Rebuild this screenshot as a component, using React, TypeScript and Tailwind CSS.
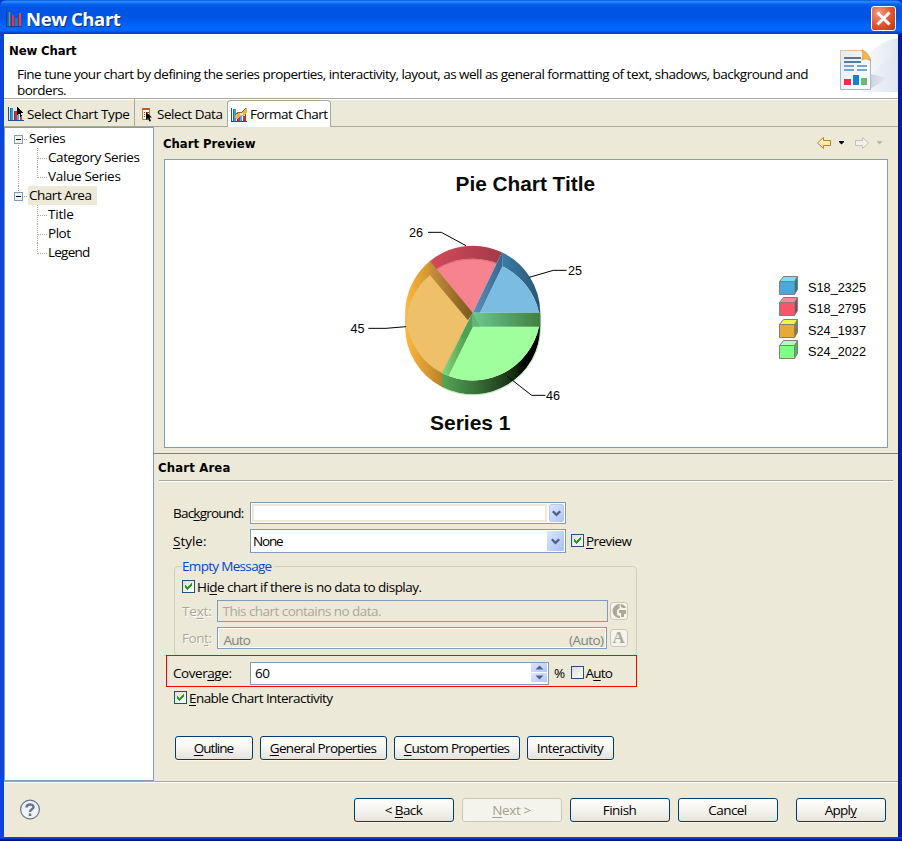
import { useLayoutEffect, useRef, type ReactNode } from "react";

const UI = "font-['Open_Sans','Noto_Sans',sans-serif]";
const HEADING = "font-['DejaVu_Sans_Condensed','DejaVu_Sans',sans-serif] text-[13px] font-bold";

/* A label whose letters are tracked so that its longest line is `w` pixels wide. */
function Label({ w, className = "", children }: { w: number; className?: string; children: ReactNode }) {
  const ref = useRef<HTMLSpanElement>(null);
  useLayoutEffect(() => {
    const el = ref.current;
    if (!el) return;
    el.style.letterSpacing = "0px";
    const n = Math.max(1, ...el.innerText.split("\n").map((line) => line.length));
    el.style.letterSpacing = `${(w - 0.5 - el.getBoundingClientRect().width) / n}px`;
  }, [w, children]);
  return (
    <span ref={ref} className={`inline-block shrink-0 whitespace-nowrap ${className}`}>
      {children}
    </span>
  );
}

function U({ children }: { children: ReactNode }) {
  return <span className="underline decoration-1 underline-offset-2">{children}</span>;
}

function Bars({ children }: { children?: ReactNode }) {
  return (
    <svg width="16" height="16" viewBox="0 0 16 16" shapeRendering="crispEdges" className="-mt-px shrink-0">
      <path d="M0 1h1v13h15v1H0z" fill="#1d5288" />
      <path d="M2 2h3v12H2z" fill="#2f9be0" />
      <path d="M2 2h1v12H2z" fill="#1672b8" />
      <path d="M6 5h3v9H6z" fill="#e02c40" />
      <path d="M6 5h1v9H6z" fill="#a41c30" />
      <path d="M9 8h2v6H9z" fill="#38b4e8" />
      <path d="M12 9h2v5h-2z" fill="#e8404c" />
      {children}
    </svg>
  );
}

function TitleIcon() {
  return (
    <svg width="16" height="18" viewBox="0 0 16 18" shapeRendering="crispEdges">
      <path d="M0 1h1v15h15v1H0z" fill="#1b3f8c" />
      <path d="M2 2h3v14H2z" fill="#31659c" />
      <path d="M3 2h1v14H3z" fill="#3ea5b8" />
      <path d="M6 5h2v11H6z" fill="#e4324c" />
      <path d="M5 5h1v11H5z" fill="#782858" />
      <path d="M9 8h3v8H9z" fill="#2f75a4" />
      <path d="M13 3h2v13h-2z" fill="#f03e50" />
      <path d="M12 3h1v13h-1z" fill="#802848" />
    </svg>
  );
}

const arrowCursor = "M0 0l6 5.5H3.6L5 9 3.4 9.6 2.2 6.4 0 8z";

function Check({ on }: { on?: boolean }) {
  return (
    <span className="-mt-px flex size-[13px] shrink-0 items-center justify-center border border-[#1c5180] bg-linear-to-br from-[#dcdcd7] to-white">
      {on && (
        <svg width="9" height="9" viewBox="0 0 9 9" shapeRendering="crispEdges">
          <path d="M1 3h1v1h1v1h1V4h1V3h1V2h1V1h1v3H7v1H6v1H5v1H4v1H3V7H2V6H1z" fill="#21a121" />
        </svg>
      )}
    </span>
  );
}

function Chevron() {
  return (
    <svg width="9" height="7" viewBox="0 0 9 7">
      <path d="M0.800 1.200l3.700 3.700L8.200 1.200" fill="none" stroke="#4d6185" strokeWidth="2.300" />
    </svg>
  );
}

function Button({ w, tw, className = "", disabled, children }: { w: string; tw: number; className?: string; disabled?: boolean; children: ReactNode }) {
  return (
    <button
      className={`flex h-6 shrink-0 items-center justify-center rounded-[3px] border pr-px ${w} ${className} ${
        disabled
          ? "border-[#c9c7ba] bg-[#f5f4ea] text-[#a1a192]"
          : "border-[#003c74] bg-linear-to-b from-white via-[#f5f4ef] to-[#e6e3da] text-black shadow-[0_1px_0_#f8f6ee]"
      }`}
    >
      <Label w={tw}>{children}</Label>
    </button>
  );
}

function TreeItem({ label, w, level, selected, last }: { label: string; w: number; level: 0 | 1; selected?: boolean; last?: boolean }) {
  if (level === 0)
    return (
      <div className="flex h-[19px] items-center pl-[9px]">
        <svg width="14" height="19" viewBox="0 0 14 19" shapeRendering="crispEdges" className="shrink-0">
          {selected ? <path d="M4.5 0v6" stroke="#aca899" strokeDasharray="1 1" /> : <path d="M4.5 14v5" stroke="#aca899" strokeDasharray="1 1" />}
          <path d="M10 10.5h4" stroke="#aca899" strokeDasharray="1 1" />
          <rect x="0.5" y="6.5" width="8" height="8" fill="#f4f2ec" stroke="#7b9ebd" />
          <path d="M2 10.5h5" stroke="#000" />
        </svg>
        <span className={`flex h-[19px] items-center pb-[2px] pl-px ${selected ? "bg-[#ece9d8] pr-[5px]" : ""}`}>
          <Label w={w}>{label}</Label>
        </span>
      </div>
    );
  return (
    <div className="flex h-[19px] items-center pl-[9px]">
      <svg width="34" height="19" viewBox="0 0 34 19" shapeRendering="crispEdges" className="shrink-0">
        {(label === "Category Series" || label === "Value Series") && <path d="M4.5 0v19" stroke="#aca899" strokeDasharray="1 1" />}
        <path d={last ? "M23.5 0v11M24 10.5h9" : "M23.5 0v19M24 10.5h9"} fill="none" stroke="#aca899" strokeDasharray="1 1" />
      </svg>
      <Label w={w} className="mb-[2px]">{label}</Label>
    </div>
  );
}

const legend = [
  { t: "S18_2325", y: 116, f: "#4fa5dc", top: "#70e4f4", side: "#34749a" },
  { t: "S18_2795", y: 137, f: "#f5566a", top: "#ff8598", side: "#ab3c4a" },
  { t: "S24_1937", y: 159, f: "#e6aa38", top: "#fcf04c", side: "#a17727" },
  { t: "S24_2022", y: 180, f: "#80ff80", top: "#b4ffb4", side: "#59b259" },
];

const grads: [string, string, string][] = [
  ["red", "#d34a5c", "#a23a47"],
  ["blue", "#3a7da8", "#285674"],
  ["blueWall", "#5f8fb8", "#34688f"],
  ["greenWall", "#6cc98e", "#417f41"],
  ["orangeWall", "#c98f3c", "#79591d"],
  ["orange", "#ffb83c", "#b98229"],
  ["greenLeft", "#84d878", "#479047"],
];

function PieChart() {
  return (
    <svg width="722" height="287" viewBox="0 0 722 287" className="block">
      <defs>
        {grads.map(([id, a, b]) => (
          <linearGradient key={id} id={id}>
            <stop offset="0" stopColor={a} />
            <stop offset="1" stopColor={b} />
          </linearGradient>
        ))}
        <linearGradient id="greenSide">
          <stop offset="0" stopColor="#55a655" />
          <stop offset="0.35" stopColor="#397039" />
          <stop offset="0.75" stopColor="#14290f" />
          <stop offset="0.85" stopColor="#000" />
          <stop offset="0.98" stopColor="#000" />
          <stop offset="1" stopColor="#2c5c34" />
        </linearGradient>
      </defs>
      <g className="font-['Liberation_Sans',Arial,sans-serif] font-bold" fontSize="20.500" fill="#0a0a0a">
        <text x="290.500" y="31" textLength="139.500" lengthAdjust="spacingAndGlyphs">Pie Chart Title</text>
        <text x="265" y="270" textLength="80.500" lengthAdjust="spacingAndGlyphs">Series 1</text>
      </g>
      <g transform="translate(175 5) scale(0.33333)">
        <path d="M270 288A203 203 0 0 1 486 262L470 295A203 203 0 0 0 270 330Z" fill="url(#red)" />
        <path d="M270 330L286 314A203 203 0 0 1 470 295L398 443L384 466Z" fill="#f7838f" />
        <path d="M293 308A203 203 0 0 1 472 294" fill="none" stroke="#e07080" strokeWidth="3" transform="translate(0 3)" />
        <path d="M486 262A203 203 0 0 1 601 443H597A203 203 0 0 0 487 304Z" fill="url(#blue)" />
        <path d="M487 304A203 203 0 0 1 597 443H420Z" fill="#7bbce3" />
        <path d="M486 262L487 304L420 443H398Z" fill="url(#blueWall)" />
        <path d="M270 330L384 466L306 624A203 203 0 0 1 197 464A203 203 0 0 1 270 330Z" fill="#eec06a" stroke="#dfa94a" strokeWidth="2" />
        <path d="M270 288A203 203 0 0 0 195.500 443V485A203 203 0 0 0 306 666V624A203 203 0 0 1 198 464A203 203 0 0 1 270 330Z" fill="url(#orange)" />
        <path d="M270 288L398 443L384 466L270 330Z" fill="url(#orangeWall)" />
        <path d="M601 443V485A203 203 0 0 1 306 666V624A203 203 0 0 0 597 485Z" fill="url(#greenSide)" />
        <path d="M602 487A203 203 0 0 1 306 667" fill="none" stroke="#9be09b" strokeWidth="2" />
        <path d="M398 485H597A203 203 0 0 1 326 633Z" fill="#a0ff9d" />
        <path d="M398 443V485L326 633L306 624Z" fill="url(#greenLeft)" />
        <path d="M398 443V485L380 520L362 515Z" fill="#4fa153" />
        <path d="M398 443H601V485H398Z" fill="url(#greenWall)" />
        <path d="M398 485H420L398 443Z" fill="#56aa69" opacity="0.6" />
        <g fill="none" stroke="#000" strokeWidth="3">
          <path d="M264 202H304L378 242" />
          <path d="M568 337L640 316H680" />
          <path d="M85 490H138L198 485" />
          <path d="M502 634L575 691H616" />
        </g>
      </g>
      <g className="font-['Liberation_Sans',Arial,sans-serif]" fontSize="13.500" fill="#000">
        <text x="244" y="77" textLength="14" lengthAdjust="spacingAndGlyphs">26</text>
        <text x="403" y="115" textLength="14" lengthAdjust="spacingAndGlyphs">25</text>
        <text x="185.500" y="173" textLength="14" lengthAdjust="spacingAndGlyphs">45</text>
        <text x="381" y="240" textLength="14" lengthAdjust="spacingAndGlyphs">46</text>
        {legend.map((l) => (
          <g key={l.t}>
            <path d={`M614.500 ${l.y + 5.5}l4 -5h14v13l-3 5h-15z`} fill={l.top} />
            <path d={`M629.500 ${l.y + 5.5}l3 -5v13l-3 5z`} fill={l.side} />
            <path d={`M614.500 ${l.y + 5.5}h15v13h-15z`} fill={l.f} />
            <path d={`M614.500 ${l.y + 5.5}l4 -5h14v13l-3 5h-15zh15v13M629.500 ${l.y + 5.5}l3 -5`} fill="none" stroke="#808080" />
            <text x="643" y={l.y + 16} textLength="58" lengthAdjust="spacingAndGlyphs">{l.t}</text>
          </g>
        ))}
      </g>
    </svg>
  );
}

function HeaderArt() {
  return (
    <svg width="76" height="64" viewBox="0 0 76 64" className="shrink-0">
      <defs>
        <linearGradient id="swoosh" x1="0" y1="0" x2="1" y2="0">
          <stop offset="0" stopColor="#fff" />
          <stop offset="1" stopColor="#e0e6f2" />
        </linearGradient>
        <linearGradient id="page" x1="0" y1="0" x2="1" y2="1">
          <stop offset="0" stopColor="#e2eaf4" />
          <stop offset="1" stopColor="#fff" />
        </linearGradient>
        <linearGradient id="cast" x1="0" y1="0" x2="1" y2="0">
          <stop offset="0" stopColor="#9aa2b4" stopOpacity="0.4" />
          <stop offset="1" stopColor="#9aa2b4" stopOpacity="0" />
        </linearGradient>
      </defs>
      <path d="M76 4C62 6 46 16 36 32V58H76Z" fill="url(#swoosh)" />
      <path d="M76 20C62 24 50 38 40 58H76Z" fill="#dfe5f2" opacity="0.3" />
      <path d="M48 55V40L66 44Z" fill="url(#cast)" />
      <path d="M18.500 16.500H40L48.500 26V55.500H18.500Z" fill="url(#page)" stroke="#a5b6c8" />
      <path d="M18.500 28V16.500H40" fill="none" stroke="#e0c294" />
      <path d="M40 16C41 19 41 23 40 26C43 24 46 25 48.500 27C48 22 44 17 40 16Z" fill="#f5b74f" stroke="#cf9346" strokeWidth="0.700" />
      <path d="M22 23h17v2H22z" fill="#667083" />
      <path d="M22 27h17v2H22z" fill="#4b7eae" />
      <path d="M22 31h10v2H22zM35 31h10v2H35zM22 35h10v2H22zM35 35h10v2H35z" fill="#79a4ce" />
      <path d="M22 45h7v6h-7z" fill="#ef2d4e" />
      <path d="M31 41h6v10h-6z" fill="#1482cf" />
      <path d="M39 44h6v7h-6z" fill="#6fb778" />
    </svg>
  );
}

function NavArrows() {
  return (
    <svg width="68" height="16" viewBox="0 0 68 16">
      <defs>
        <linearGradient id="gold" x1="0" y1="0" x2="0" y2="1">
          <stop offset="0" stopColor="#fffdf0" />
          <stop offset="1" stopColor="#ffd97a" />
        </linearGradient>
      </defs>
      <path d="M1.500 8L7.500 2.500V5.500H14.500V10.500H7.500V13.500Z" fill="url(#gold)" stroke="#bd8414" />
      <path d="M23 6h5v1l-2.500 2.500L23 7z" fill="#000" />
      <path d="M52.500 8L46.500 2.500V5.500H39.500V10.500H46.500V13.500Z" fill="#f1f0eb" stroke="#c1c0b9" />
      <path d="M61 6h5v1l-2.500 2.500L61 7z" fill="#bcb9ab" />
    </svg>
  );
}

export default function App() {
  return (
    <div className={`flex h-[841px] w-[902px] flex-col overflow-hidden bg-[#0831d9] text-[13.5px] leading-4 text-black ${UI}`}>
      {/* Title bar */}
      <header className="flex h-[34px] shrink-0 items-center rounded-t-[6px] bg-[linear-gradient(180deg,#0a55dc_0%,#2b8cff_5%,#0663f0_12%,#0054e3_22%,#0054e3_50%,#0066ff_80%,#0066ff_90%,#0048d0_96%,#0038b8_100%)] pl-[6px] pt-[3px] pr-[6px]">
        <TitleIcon />
        <Label w={95} className="ml-1 text-[18.5px] leading-[30px] font-bold text-white [text-shadow:1px_1px_0_#0a2a80]">
          New Chart
        </Label>
        <button className="ml-auto flex size-[25px] items-center justify-center rounded-[3px] border border-white bg-[radial-gradient(circle_at_30%_25%,#f09a80,#e2522c_55%,#c23410)]">
          <svg width="17" height="17" viewBox="0 0 17 17">
            <path d="M2.500 2.500l12 12M14.500 2.500l-12 12" stroke="#fff" strokeWidth="3" />
          </svg>
        </button>
      </header>

      <div className="flex h-[803px] shrink-0 flex-col border-l-4 border-r-4 border-l-[#0a45dc] border-r-[#001aa8] shadow-[inset_-1px_0_0_#0048e8]">
        {/* Wizard banner */}
        <section className="flex h-16 shrink-0 bg-white">
          <div className="flex flex-1 flex-col pl-[5px]">
            <Label w={68} className={`mt-[9px] self-start ${HEADING}`}>New Chart</Label>
            <Label w={791.5} className="mt-[7px] ml-2 self-start">
              Fine tune your chart by defining the series properties, interactivity, layout, as well as general formatting of text, shadows, background and
              <br />
              borders.
            </Label>
          </div>
          <div className="-ml-20 shrink-0">
            <HeaderArt />
          </div>
        </section>

        {/* Tabs */}
        <nav className="flex h-[29px] shrink-0 border-t border-b border-[#aca899] bg-[#ece9d8] shadow-[inset_0_1px_0_#fff]">
          <div className="flex h-[27px] w-[131px] items-center border-r border-[#aca899] pt-1 pl-1">
            <Bars>
              <path d={arrowCursor} transform="translate(9 1)" fill="#000" />
            </Bars>
            <Label w={103} className="mb-[2px] ml-[3px]">Select Chart Type</Label>
          </div>
          <div className="flex h-[27px] w-[92px] items-center pt-1 pl-[6px]">
            <svg width="12" height="16" viewBox="0 0 12 16" className="shrink-0">
              <path d="M1.500 1.500h7v11h-7z" fill="#fff8e4" stroke="#b98436" />
              <path d="M1 1h8v2H1z" fill="#c05a34" />
              <path d="M3 5h1v1H3zM5 5h3v1H5zM3 7h1v1H3zM5 7h3v1H5zM3 9h1v1H3zM5 9h2v1H5z" fill="#a0402c" />
              <path d={arrowCursor} transform="translate(5 5)" fill="#000" />
            </svg>
            <Label w={66} className="mb-[2px] ml-[4px]">Select Data</Label>
          </div>
          <div className="mt-px flex h-[27px] w-[104px] items-center rounded-t-[4px] border border-b-0 border-[#aca899] bg-white pt-[2px] pl-[3px]">
            <Bars>
              <path d="M14 7h1v7h-1zM12 9h2v5h-2z" fill="#c82c38" />
              <path d="M4 8l4-3h3l4-4 1 1v3l-4 4H9l-3 3-2-1z" fill="#e8b24c" />
              <path d="M4 8l4-3h3l4-4" stroke="#94632a" fill="none" />
              <path d="M9 6h3v2H9z" fill="#fff0b8" />
            </Bars>
            <Label w={78} className="mb-[2px] ml-[3px]">Format Chart</Label>
          </div>
        </nav>

        <main className="flex h-[654px] shrink-0 bg-[#ece9d8]">
          {/* Navigation tree */}
          <aside className="w-[150px] shrink-0 border border-[#7f9db9] bg-white pt-px">
            <TreeItem label="Series" w={37} level={0} />
            <TreeItem label="Category Series" w={92} level={1} />
            <TreeItem label="Value Series" w={73} level={1} last />
            <TreeItem label="Chart Area" w={63} level={0} selected />
            <TreeItem label="Title" w={26} level={1} />
            <TreeItem label="Plot" w={23} level={1} />
            <TreeItem label="Legend" w={42} level={1} last />
          </aside>

          <div className="flex flex-1 flex-col">
            <div className="flex h-8 shrink-0 items-center justify-between pr-[14px] pl-[9px]">
              <Label w={93} className={`pt-px ${HEADING}`}>Chart Preview</Label>
              <NavArrows />
            </div>
            <div className="ml-[10px] h-[289px] w-[724px] shrink-0 border border-[#7f9db9] bg-white">
              <PieChart />
            </div>

            <section className="mt-[5px] flex h-[328px] shrink-0 flex-col border-t border-[#808080]">
              <div className="ml-[5px] flex h-[27px] w-[734px] shrink-0 items-center border-b border-[#aca899] shadow-[0_1px_0_#fff]">
                <Label w={73} className={`-ml-px pt-px ${HEADING}`}>Chart Area</Label>
              </div>

              <div className="mt-[21px] flex h-[22px] shrink-0 items-center pl-[19px]">
                <div className="w-[77px]"><Label w={71}>Bac<U>k</U>ground:</Label></div>
                <div className="flex h-[22px] w-[316px] border border-[#7f9db9] bg-white p-px">
                  <div className="flex-1 border-2 border-[#ece9d8] bg-white" />
                  <div className="ml-[2px] flex w-[15px] items-center justify-center rounded-[2px] border border-[#b8c8f0] bg-linear-to-br from-[#dbe5ff] to-[#b2c7fa]">
                    <Chevron />
                  </div>
                </div>
              </div>

              <div className="mt-[5px] flex h-6 shrink-0 items-center pl-[19px]">
                <div className="w-[77px]"><Label w={34}><U>S</U>tyle:</Label></div>
                <div className="flex h-6 w-[316px] items-center justify-between border border-[#7f9db9] bg-white p-px pl-[2px]">
                  <Label w={30}>None</Label>
                  <div className="flex h-5 w-[17px] items-center justify-center rounded-[1px] bg-linear-to-br from-[#dbe5ff] to-[#a9c0f8]">
                    <Chevron />
                  </div>
                </div>
                <div className="ml-[5px] flex items-center"><Check on /></div>
                <Label w={46} className="ml-[2px]"><U>P</U>review</Label>
              </div>

              {/* Empty message group */}
              <fieldset className="mt-[5px] ml-5 h-[98px] w-[463px] shrink-0 rounded-[4px] border border-[#d0d0bf] pl-[7px]">
                <legend className="h-4 pr-[2px] leading-4 text-[#0046d5]"><Label w={90}>Empty Message</Label></legend>
                <div className="mt-[5px] flex h-4 items-center">
                  <Check on />
                  <Label w={225} className="ml-[2px]">Hi<U>d</U>e chart if there is no data to display.</Label>
                </div>
                <div className="mt-[5px] flex h-[22px] items-center">
                  <Label w={30} className="text-[#aca899] [text-shadow:1px_1px_0_#fff]">Te<U>x</U>t:</Label>
                  <div className="ml-[5px] flex h-[22px] w-[391px] items-center border border-[#7f9db9] pl-[5px] text-[#aca899]">
                    <Label w={159}>This chart contains no data.</Label>
                  </div>
                  <div className="ml-[2px] flex size-[18px] items-center justify-center rounded-[3px] border border-[#c9c7ba] bg-[#f5f4ea]">
                    <svg width="16" height="16" viewBox="0 0 16 16">
                      <path d="M8 1A7 7 0 1 0 9 15L9 13L6 12L6 7L9 5L8 3L10 2Z" fill="#aca899" />
                      <path d="M10 1Q14 2 15 5H12L10 4z" fill="#aca899" />
                      <path d="M8 7h7v4h-2v3h-3v-4H8z" fill="#aca899" />
                    </svg>
                  </div>
                </div>
                <div className="mt-[5px] flex h-[22px] items-center">
                  <Label w={30} className="text-[#aca899] [text-shadow:1px_1px_0_#fff]">Fon<U>t</U>:</Label>
                  <div className="ml-[5px] flex h-[22px] w-[390px] items-center justify-between border border-[#7f9db9] pt-[3px] pr-[2px] pl-[6px] text-[#808080] shadow-[inset_0_0_0_1px_#fff]">
                    <Label w={27}>Auto</Label>
                    <Label w={35}>(Auto)</Label>
                  </div>
                  <div className="ml-[3px] flex size-[18px] items-center justify-center rounded-[3px] border border-[#c9c7ba] bg-[#f5f4ea] font-['Liberation_Serif',serif] text-[17px] leading-4 font-bold text-[#aca899]">
                    A
                  </div>
                </div>
              </fieldset>

              {/* Coverage row, outlined in red */}
              <div className="relative -mt-px ml-3 flex h-8 w-[471px] shrink-0 items-center border border-[#ff0000] pt-[4px] pl-[6px]">
                <div className="w-[77px]"><Label w={59}>Cover<U>a</U>ge:</Label></div>
                <div className="flex h-[23px] w-[299px] items-center justify-between border border-[#7f9db9] bg-white p-px pl-1">
                  <Label w={15}>60</Label>
                  <div className="flex flex-col">
                    {["M0.500 4.500l4-4 4 4z", "M0.500 0.500l4 4 4-4z"].map((d) => (
                      <span key={d} className="flex h-[10px] w-4 items-center justify-center border-b border-white bg-linear-to-br from-[#dbe5ff] to-[#b2c7fa]">
                        <svg width="9" height="5" viewBox="0 0 9 5"><path d={d} fill="#4d6185" /></svg>
                      </span>
                    ))}
                  </div>
                </div>
                <Label w={12} className="ml-[5px]">%</Label>
                <div className="ml-[5px]"><Check /></div>
                <Label w={27} className="ml-[2px]">A<U>u</U>to</Label>
              </div>

              <div className="mt-[3px] ml-5 flex h-4 shrink-0 items-center">
                <Check on />
                <Label w={144} className="ml-[2px]"><U>E</U>nable Chart Interactivity</Label>
              </div>

              <div className="mt-[30px] ml-[21px] flex gap-[7px]">
                <Button w="w-[78px]" tw={40}><U>O</U>utline</Button>
                <Button w="w-[127px]" tw={107}><U>G</U>eneral Properties</Button>
                <Button w="w-[126px]" tw={106}><U>C</U>ustom Properties</Button>
                <Button w="w-[87px]" tw={67}>Inte<U>r</U>activity</Button>
              </div>
            </section>
          </div>
        </main>

        {/* Dialog buttons */}
        <footer className="flex h-14 shrink-0 border-t border-[#aca899] bg-[#ece9d8] pt-4 pl-4 shadow-[inset_0_1px_0_#fff]">
          <svg width="20" height="24" viewBox="0 0 20 24" className="shrink-0">
            <circle cx="10" cy="11.500" r="9.400" fill="#f1f2f5" stroke="#65758f" strokeWidth="1.200" />
            <path d="M6.500 9.500C6.500 5.500 13.500 5.500 13.500 9C13.500 11.500 10 11 10 14" fill="none" stroke="#65758f" strokeWidth="2.500" />
            <path d="M8.700 15.500h2.600v2.500H8.700z" fill="#65758f" />
          </svg>
          <div className="ml-[314px] flex gap-2">
            <Button w="w-[100px]" tw={38}>&lt; <U>B</U>ack</Button>
            <Button w="w-[100px]" tw={39} disabled><U>N</U>ext &gt;</Button>
            <Button w="w-[100px]" tw={34}>Finish</Button>
            <Button w="w-[100px]" tw={39}>Cancel</Button>
          </div>
          <Button w="w-[90px]" tw={32} className="ml-[18px]">Appl<U>y</U></Button>
        </footer>
      </div>
      <div className="h-1 shrink-0 bg-[linear-gradient(#0048e8_0_1px,#0038d0_1px_2px,#001a98_2px_3px,#00107c_3px)]" />
    </div>
  );
}
